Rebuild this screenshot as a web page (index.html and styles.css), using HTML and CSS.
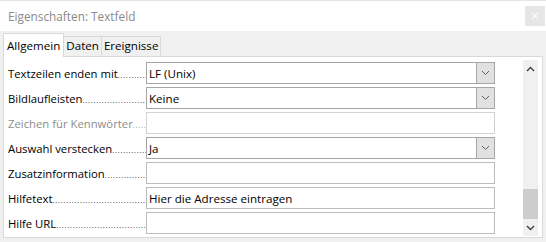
FILE: index.html
```html
<!DOCTYPE html>
<html lang="de">
<head>
    <meta charset="UTF-8">
    <title>Eigenschaften: Textfeld</title>
    <link rel="stylesheet" href="styles.css">
</head>
<body>
    <div class="window">
        <div class="titlebar">
            <span class="title">Eigenschaften: Textfeld</span>
            <span class="close">&times;</span>
        </div>
        <div class="frame">
            <div class="tabs">
                <div class="tab active">Allgemein</div>
                <div class="tab">Daten</div>
                <div class="tab">Ereignisse</div>
            </div>
            <div class="panel">
                <div class="rows">
                    <div class="row">
                        <span class="label">Textzeilen enden mit<span class="dots"></span></span>
                        <div class="field combo"><span class="value">LF (Unix)</span><span class="drop"><svg width="9" height="6" viewBox="0 0 9 6"><path d="M1 1l3.5 3.5L8 1" fill="none" stroke="#606060" stroke-width="1"/></svg></span></div>
                    </div>
                    <div class="row">
                        <span class="label">Bildlaufleisten<span class="dots"></span></span>
                        <div class="field combo"><span class="value">Keine</span><span class="drop"><svg width="9" height="6" viewBox="0 0 9 6"><path d="M1 1l3.5 3.5L8 1" fill="none" stroke="#606060" stroke-width="1"/></svg></span></div>
                    </div>
                    <div class="row disabled">
                        <span class="label">Zeichen für Kennwörter<span class="dots"></span></span>
                        <div class="field"></div>
                    </div>
                    <div class="row">
                        <span class="label">Auswahl verstecken<span class="dots"></span></span>
                        <div class="field combo"><span class="value">Ja</span><span class="drop"><svg width="9" height="6" viewBox="0 0 9 6"><path d="M1 1l3.5 3.5L8 1" fill="none" stroke="#606060" stroke-width="1"/></svg></span></div>
                    </div>
                    <div class="row">
                        <span class="label">Zusatzinformation<span class="dots"></span></span>
                        <div class="field"></div>
                    </div>
                    <div class="row">
                        <span class="label">Hilfetext<span class="dots"></span></span>
                        <div class="field"><span class="value">Hier die Adresse eintragen</span></div>
                    </div>
                    <div class="row">
                        <span class="label">Hilfe URL<span class="dots"></span></span>
                        <div class="field"></div>
                    </div>
                </div>
                <div class="scrollbar">
                    <span class="arrow"><svg width="9" height="6" viewBox="0 0 9 6"><path d="M1 5l3.5-3.5L8 5" fill="none" stroke="#404040" stroke-width="1.4"/></svg></span>
                    <span class="track"><span class="thumb"></span></span>
                    <span class="arrow"><svg width="9" height="6" viewBox="0 0 9 6"><path d="M1 1l3.5 3.5L8 1" fill="none" stroke="#404040" stroke-width="1.4"/></svg></span>
                </div>
            </div>
        </div>
    </div>
</body>
</html>
```

FILE: styles.css
```css
* {
    margin: 0;
    padding: 0;
    box-sizing: border-box;
}

body {
    width: 546px;
    height: 242px;
    overflow: hidden;
    font-family: 'Open Sans', 'Noto Sans', sans-serif;
    font-size: 11.3px;
    color: #000;
    background: #f0f0f0;
}

.titlebar {
    height: 31px;
    background: #fff;
    border-top: 1px solid #e4e4e4;
    display: flex;
    align-items: center;
    justify-content: space-between;
    padding: 0 1px 0 8px;
}

.title {
    color: #8a8a8a;
    font-size: 11.8px;
}

.close {
    width: 20px;
    height: 20px;
    background: #e6e6e6;
    color: #fff;
    font-size: 14px;
    line-height: 20px;
    text-align: center;
}

.frame {
    padding: 0 3px 5px 3px;
}

.tabs {
    height: 25px;
    display: flex;
    align-items: flex-end;
    font-size: 11.6px;
}

.tab {
    height: 20px;
    padding: 0 2px;
    line-height: 18px;
    background: #f0f0f0;
    border: 1px solid #d9d9d9;
    border-bottom: none;
    border-left: none;
}

.tab.active {
    height: 24px;
    padding: 0 3px 0 3px;
    line-height: 24px;
    background: #fff;
    border: 1px solid #d9d9d9;
    border-bottom: none;
    margin-bottom: -1px;
    position: relative;
    z-index: 1;
}

.panel {
    height: 182px;
    background: #fff;
    border: 1px solid #d9d9d9;
    display: flex;
    padding: 5px 4px 1px 4px;
}

.rows {
    display: flex;
    flex-direction: column;
    gap: 3px;
}

.row {
    display: flex;
    align-items: center;
    height: 22px;
}

.label {
    width: 138px;
    display: flex;
    align-items: baseline;
    overflow: hidden;
    white-space: nowrap;
}

.dots {
    flex: 1;
    overflow: hidden;
    font-size: 7px;
    letter-spacing: 0.9px;
    padding-right: 1px;
}

.dots::after {
    content: "..............................................................................";
}

.field {
    width: 349px;
    height: 22px;
    border: 1px solid #bcbcbc;
    display: flex;
    align-items: center;
    font-size: 11.6px;
}

.field.combo {
    border-color: #a6a6a6;
}

.value {
    flex: 1;
    padding-left: 2px;
    white-space: nowrap;
}

.drop {
    width: 18px;
    height: 20px;
    background: #e1e1e1;
    border-left: 1px solid #a6a6a6;
    display: flex;
    align-items: center;
    justify-content: center;
    margin-left: auto;
}

.disabled .label {
    color: #8c8c8c;
}

.disabled .field {
    border-color: #d2d2d2;
}

.scrollbar {
    width: 15px;
    margin: -2px 0 0 28px;
    height: 176px;
    background: #f0f0f0;
    display: flex;
    flex-direction: column;
}

.arrow {
    height: 17px;
    display: flex;
    align-items: center;
    justify-content: center;
}

.track {
    flex: 1;
    display: flex;
    flex-direction: column;
    justify-content: flex-end;
}

.thumb {
    height: 30px;
    background: #cdcdcd;
}
```
